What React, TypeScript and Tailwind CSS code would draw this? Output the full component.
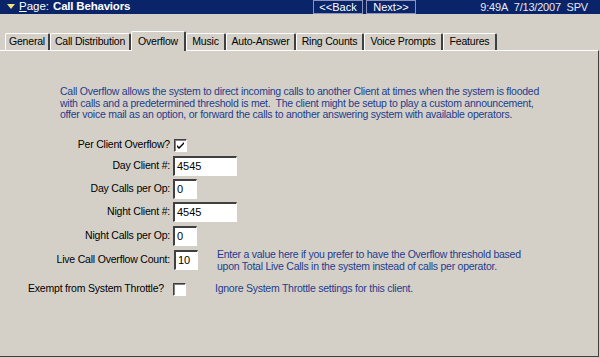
import React from 'react';

const navy = 'bg-[#0a246a]';

function SunkenInput({ value, width }: { value: string; width: string }) {
  return (
    <div
      className={`${width} h-[20px] bg-white border-t-2 border-l-2 border-t-[#404040] border-l-[#404040] border-b border-r border-b-white border-r-white flex items-center pl-[2px] text-[11px] text-black`}
    >
      {value}
    </div>
  );
}

function CheckBox({ checked }: { checked?: boolean }) {
  return (
    <div className="w-[13px] h-[13px] bg-white border-t border-l border-t-[#404040] border-l-[#404040] border-b border-r border-b-white border-r-white shadow-[inset_1px_1px_0_#808080] flex items-center justify-center">
      {checked && (
        <svg width="9" height="9" viewBox="0 0 9 9">
          <path d="M1 4 L3 6 L8 1 L8 3 L3 8 L1 6 Z" fill="#000" />
        </svg>
      )}
    </div>
  );
}

const tabs = [
  { t: 'General', w: 'w-[45px]' },
  { t: 'Call Distribution', w: 'w-[81px]' },
  { t: 'Overflow', w: 'w-[55px]' },
  { t: 'Music', w: 'w-[40px]' },
  { t: 'Auto-Answer', w: 'w-[70px]' },
  { t: 'Ring Counts', w: 'w-[68px]' },
  { t: 'Voice Prompts', w: 'w-[79px]' },
  { t: 'Features', w: 'w-[54px]' },
];

const label = 'w-[171px] text-right pr-[1px] text-[10.5px] tracking-[-0.2px] text-black';
const blue = 'text-[#1f3c8c] text-[10.5px] tracking-[-0.25px]';

export default function App() {
  return (
    <div
      className="w-[600px] h-[358px] bg-[#d4d0c8] overflow-hidden flex flex-col"
      style={{ fontFamily: '"Liberation Sans", Arial, sans-serif' }}
    >
      {/* title bar */}
      <div className={`${navy} h-[14px] flex items-center text-white text-[11.5px] leading-none`}>
        <div className="w-[313px] flex items-center">
          <svg width="8" height="6" viewBox="0 0 8 6" className="ml-[7px] mr-[4px]">
            <path d="M0 0 L8 0 L4 5 Z" fill="#f5e27a" />
          </svg>
          <span>
            <span className="underline">P</span>age:
          </span>
          <span className="ml-[4px] font-bold tracking-[-0.2px]">Call Behaviors</span>
        </div>
        <div className="flex h-[14px]">
          <div className="w-[50px] h-[14px] border border-[#8a93b8] flex items-center justify-center text-[11px]">&lt;&lt;Back</div>
          <div className="w-[50px] h-[14px] ml-[3px] border border-[#8a93b8] flex items-center justify-center text-[11px]">Next&gt;&gt;</div>
        </div>
        <div className="ml-auto mr-[12px] text-[11px] text-[#e8e8f0] tracking-[-0.2px]">9:49A&nbsp; 7/13/2007&nbsp; SPV</div>
      </div>

      {/* tabs */}
      <div className="mt-[16px] flex items-end pl-[5px] h-[20px] text-[10.5px] tracking-[-0.2px] text-black">
        {tabs.map(({ t, w }) =>
          t === 'Overflow' ? (
            <div
              key={t}
              className={`${w} h-[20px] -mb-[1px] bg-[#d4d0c8] border-t border-l border-t-white border-l-white border-r-2 border-r-[#404040] rounded-t-[2px] flex items-center justify-center relative z-10`}
            >
              {t}
            </div>
          ) : (
            <div
              key={t}
              className={`${w} h-[17px] border-t border-l border-t-white border-l-white border-r-2 border-r-[#404040] rounded-t-[2px] flex items-center justify-center`}
            >
              {t}
            </div>
          )
        )}
      </div>

      {/* panel */}
      <div className="flex-1 mr-[1px] mb-[1px] border-t border-t-white border-r border-r-[#404040] border-b border-b-[#404040] flex flex-col text-[11px]">
        <p className={`mt-[35px] ml-[60px] leading-[11.5px] whitespace-nowrap ${blue}`}>
          Call Overflow allows the system to direct incoming calls to another Client at times when the system is flooded
          <br />
          with calls and a predetermined threshold is met.&nbsp; The client might be setup to play a custom announcement,
          <br />
          offer voice mail as an option, or forward the calls to another answering system with available operators.
        </p>

        <div className="mt-[18px] flex items-center h-[13px]">
          <div className={label}>Per Client Overflow?</div>
          <div className="ml-[3px]">
            <CheckBox checked />
          </div>
        </div>

        <div className="mt-[4px] flex items-center h-[20px]">
          <div className={label}>Day Client #:</div>
          <div className="ml-[2px]">
            <SunkenInput value="4545" width="w-[64px]" />
          </div>
        </div>

        <div className="mt-[3px] flex items-center h-[20px]">
          <div className={label}>Day Calls per Op:</div>
          <div className="ml-[2px]">
            <SunkenInput value="0" width="w-[24px]" />
          </div>
        </div>

        <div className="mt-[3px] flex items-center h-[20px]">
          <div className={label}>Night Client #:</div>
          <div className="ml-[2px]">
            <SunkenInput value="4545" width="w-[64px]" />
          </div>
        </div>

        <div className="mt-[4px] flex items-center h-[20px]">
          <div className={label}>Night Calls per Op:</div>
          <div className="ml-[2px]">
            <SunkenInput value="0" width="w-[24px]" />
          </div>
        </div>

        <div className="mt-[4px] flex items-center h-[20px]">
          <div className={label}>Live Call Overflow Count:</div>
          <div className="ml-[3px]">
            <SunkenInput value="10" width="w-[24px]" />
          </div>
          <p className={`ml-[19px] leading-[12px] whitespace-nowrap ${blue}`}>
            Enter a value here if you prefer to have the Overflow threshold based
            <br />
            upon Total Live Calls in the system instead of calls per operator.
          </p>
        </div>

        <div className="mt-[13px] flex items-center h-[13px]">
          <div className="w-[165px] text-right pr-[1px] text-[10.5px] tracking-[-0.2px] text-black">Exempt from System Throttle?</div>
          <div className="ml-[8px]">
            <CheckBox />
          </div>
          <p className={`ml-[29px] whitespace-nowrap ${blue}`}>Ignore System Throttle settings for this client.</p>
        </div>
      </div>
    </div>
  );
}
